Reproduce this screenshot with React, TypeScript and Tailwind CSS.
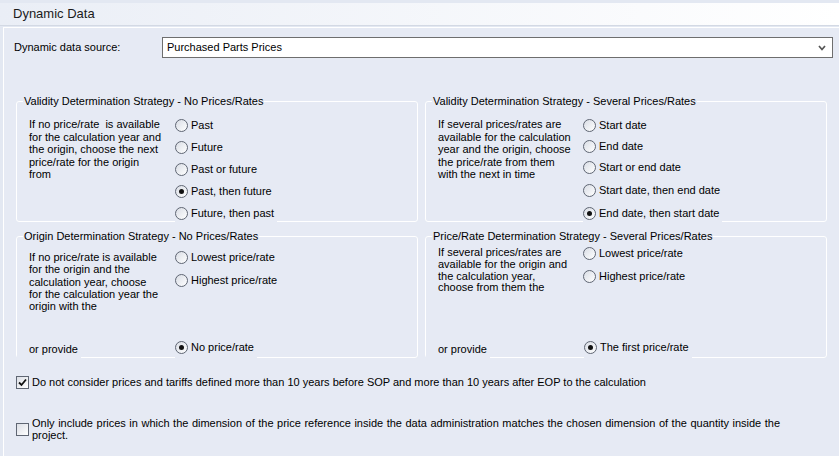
import React from 'react';

const font = { fontFamily: '"Liberation Sans", "DejaVu Sans", sans-serif' };

function RadioDot({ checked }: { checked?: boolean }) {
    return (
        <span className="flex h-[13px] w-[13px] shrink-0 items-center justify-center rounded-full border border-[#5f6673] bg-gradient-to-br from-[#d9dde5] to-white">
            {checked && <span className="h-[5px] w-[5px] rounded-full bg-[#111]" />}
        </span>
    );
}

function Radio({ label, checked, className }: { label: string; checked?: boolean; className?: string }) {
    return (
        <div className={'flex w-fit items-center gap-[3px] bg-[#e6eaf4] pr-[3px] ' + (className ?? '')}>
            <RadioDot checked={checked} />
            <span className="whitespace-nowrap leading-[13px]">{label}</span>
        </div>
    );
}

function Lines({ lines, className }: { lines: string[]; className: string }) {
    return (
        <p className={'whitespace-pre ' + className}>
            {lines.map((l, i) => (
                <React.Fragment key={i}>
                    {l}
                    {i < lines.length - 1 && <br />}
                </React.Fragment>
            ))}
        </p>
    );
}

function GroupBox({ title, className, children }: { title: string; className: string; children: React.ReactNode }) {
    return (
        <fieldset className={'min-w-0 rounded-[3px] border border-white ' + className}>
            <legend className="ml-[6px] px-[1px] leading-[13px]">{title}</legend>
            {children}
        </fieldset>
    );
}

function OrProvide({ label }: { label: string }) {
    return (
        <div className="grid grid-cols-[146px_1fr] items-start">
            <div className="mt-[3px] -ml-[12px] h-[19px] w-[64px] bg-[#e6eaf4] pl-[12px] pt-[4px] leading-[13px]">
                or provide
            </div>
            <Radio label={label} checked className="h-[22px]" />
        </div>
    );
}

function CheckBox({ checked }: { checked?: boolean }) {
    return (
        <span className="flex h-[13px] w-[13px] shrink-0 items-center justify-center border border-[#5f6673] bg-gradient-to-br from-[#dcdfe6] to-white">
            {checked && (
                <svg width="9" height="9" viewBox="0 0 9 9">
                    <path d="M1 4.5 L3.5 7 L8 1.5" fill="none" stroke="#111" strokeWidth="1.8" />
                </svg>
            )}
        </span>
    );
}

export default function App() {
    return (
        <div className="flex h-[456px] w-[839px] flex-col overflow-hidden bg-[#e3e8f2] pt-[3px] text-[11px] text-black" style={font}>
            <div className="flex h-[23px] items-center border-b border-[#d3d9e4] bg-gradient-to-r from-[#eaeef6] to-white pl-[13px] text-[13px] text-[#1b1b1b]">
                Dynamic Data
            </div>
            <div className="mt-[1px] ml-[3px] flex-1 border-l border-t border-white bg-[#e6eaf4]">
                <div className="mt-[9px] flex h-[21px] items-center pl-[10px]">
                    <span className="w-[148px] leading-[13px]">Dynamic data source:</span>
                    <div className="flex h-[21px] w-[671px] items-center justify-between border border-[#6e6e6e] bg-white pl-[4px] pr-[6px]">
                        <span className="leading-[13px]">Purchased Parts Prices</span>
                        <svg width="8" height="6" viewBox="0 0 8 6">
                            <path d="M1 1 L4 4.5 L7 1" fill="none" stroke="#555" strokeWidth="1.7" />
                        </svg>
                    </div>
                </div>

                <div className="mt-[37px] grid grid-cols-[402px_402px] gap-x-[7px] gap-y-[8px] pl-[12px]">
                    <GroupBox title="Validity Determination Strategy - No Prices/Rates" className="h-[127px]">
                        <div className="grid grid-cols-[146px_1fr] pl-[12px] pt-[6px]">
                            <Lines
                                className="pt-[4px] leading-[12.5px]"
                                lines={[
                                    'If no price/rate  is available',
                                    'for the calculation year and',
                                    'the origin, choose the next',
                                    'price/rate for the origin',
                                    'from',
                                ]}
                            />
                            <div className="flex flex-col">
                                <Radio label="Past" className="h-[22px]" />
                                <Radio label="Future" className="h-[22px]" />
                                <Radio label="Past or future" className="h-[22px]" />
                                <Radio label="Past, then future" checked className="h-[22px]" />
                                <Radio label="Future, then past" className="h-[22px]" />
                            </div>
                        </div>
                    </GroupBox>

                    <GroupBox title="Validity Determination Strategy - Several Prices/Rates" className="h-[127px]">
                        <div className="grid grid-cols-[145px_1fr] pl-[12px] pt-[6px]">
                            <Lines
                                className="pt-[4px] leading-[12.5px]"
                                lines={[
                                    'If several prices/rates are',
                                    'available for the calculation',
                                    'year and the origin, choose',
                                    'the price/rate from them',
                                    'with the next in time',
                                ]}
                            />
                            <div className="flex flex-col">
                                <Radio label="Start date" className="h-[22px]" />
                                <Radio label="End date" className="h-[20px]" />
                                <Radio label="Start or end date" className="h-[23px]" />
                                <Radio label="Start date, then end date" className="h-[23px]" />
                                <Radio label="End date, then start date" checked className="h-[22px]" />
                            </div>
                        </div>
                    </GroupBox>

                    <GroupBox title="Origin Determination Strategy - No Prices/Rates" className="h-[128px]">
                        <div className="flex h-[115px] flex-col pl-[12px]">
                            <div className="grid grid-cols-[146px_1fr] pt-[3px]">
                                <Lines
                                    className="pt-[5px] leading-[12.25px]"
                                    lines={[
                                        'If no price/rate is available',
                                        'for the origin and the',
                                        'calculation year, choose',
                                        'for the calculation year the',
                                        'origin with the',
                                    ]}
                                />
                                <div className="flex flex-col">
                                    <Radio label="Lowest price/rate" className="h-[22px]" />
                                    <Radio label="Highest price/rate" className="mt-[1px] h-[22px]" />
                                </div>
                            </div>
                            <div className="mt-auto">
                                <OrProvide label="No price/rate" />
                            </div>
                        </div>
                    </GroupBox>

                    <GroupBox title="Price/Rate Determination Strategy - Several Prices/Rates" className="h-[128px]">
                        <div className="flex h-[115px] flex-col pl-[12px]">
                            <div className="grid grid-cols-[145px_1fr]">
                                <Lines
                                    className="pt-[4px] leading-[11.8px]"
                                    lines={[
                                        'If several prices/rates are',
                                        'available for the origin and',
                                        'the calculation year,',
                                        'choose from them the',
                                    ]}
                                />
                                <div className="flex flex-col">
                                    <Radio label="Lowest price/rate" className="h-[20px]" />
                                    <Radio label="Highest price/rate" className="mt-[3px] h-[20px]" />
                                </div>
                            </div>
                            <div className="mt-auto">
                                <OrProvide label="The first price/rate" />
                            </div>
                        </div>
                    </GroupBox>
                </div>

                <div className="mt-[18px] flex items-center gap-[3px] pl-[12px]">
                    <CheckBox checked />
                    <span className="leading-[13px]">
                        Do not consider prices and tariffs defined more than 10 years before SOP and more than 10 years after EOP to the calculation
                    </span>
                </div>
                <div className="mt-[28px] flex items-center gap-[3px] pl-[12px]">
                    <CheckBox />
                    <p className="w-[748px] text-justify leading-[12px]">
                        Only include prices in which the dimension of the price reference inside the data administration matches the chosen dimension of the quantity inside the project.
                    </p>
                </div>
            </div>
        </div>
    );
}
